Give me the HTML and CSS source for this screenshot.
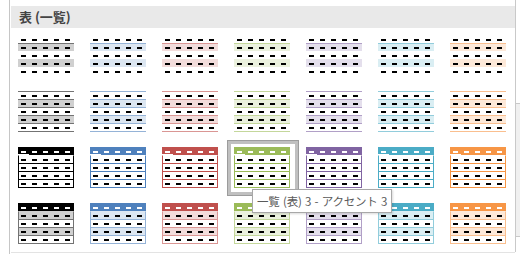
FILE: index.html
```html
<!DOCTYPE html>
<html lang="ja">
<head>
    <meta charset="UTF-8">
    <meta name="viewport" content="width=device-width, initial-scale=1.0">
    <title>表スタイル</title>
    <link rel="stylesheet" href="styles.css">
</head>
<body>
    <div class="panel">
        <div class="gallery">
            <div class="group-title">表 (一覧)</div>
            <div class="grid">
                <!-- light -->
                <div class="cell"><div class="thumb light k"><span></span><span></span><span></span><span></span><span></span></div></div>
                <div class="cell"><div class="thumb light b"><span></span><span></span><span></span><span></span><span></span></div></div>
                <div class="cell"><div class="thumb light r"><span></span><span></span><span></span><span></span><span></span></div></div>
                <div class="cell"><div class="thumb light g"><span></span><span></span><span></span><span></span><span></span></div></div>
                <div class="cell"><div class="thumb light p"><span></span><span></span><span></span><span></span><span></span></div></div>
                <div class="cell"><div class="thumb light a"><span></span><span></span><span></span><span></span><span></span></div></div>
                <div class="cell"><div class="thumb light o"><span></span><span></span><span></span><span></span><span></span></div></div>
                <!-- medium -->
                <div class="cell"><div class="thumb medium k"><span></span><span></span><span></span><span></span><span></span></div></div>
                <div class="cell"><div class="thumb medium b"><span></span><span></span><span></span><span></span><span></span></div></div>
                <div class="cell"><div class="thumb medium r"><span></span><span></span><span></span><span></span><span></span></div></div>
                <div class="cell"><div class="thumb medium g"><span></span><span></span><span></span><span></span><span></span></div></div>
                <div class="cell"><div class="thumb medium p"><span></span><span></span><span></span><span></span><span></span></div></div>
                <div class="cell"><div class="thumb medium a"><span></span><span></span><span></span><span></span><span></span></div></div>
                <div class="cell"><div class="thumb medium o"><span></span><span></span><span></span><span></span><span></span></div></div>
                <!-- grid -->
                <div class="cell"><div class="thumb grid-t k"><span></span><span></span><span></span><span></span><span></span></div></div>
                <div class="cell"><div class="thumb grid-t b"><span></span><span></span><span></span><span></span><span></span></div></div>
                <div class="cell"><div class="thumb grid-t r"><span></span><span></span><span></span><span></span><span></span></div></div>
                <div class="cell selected"><div class="thumb grid-t g"><span></span><span></span><span></span><span></span><span></span></div></div>
                <div class="cell"><div class="thumb grid-t p"><span></span><span></span><span></span><span></span><span></span></div></div>
                <div class="cell"><div class="thumb grid-t a"><span></span><span></span><span></span><span></span><span></span></div></div>
                <div class="cell"><div class="thumb grid-t o"><span></span><span></span><span></span><span></span><span></span></div></div>
                <!-- banded -->
                <div class="cell"><div class="thumb banded k"><span></span><span></span><span></span><span></span><span></span></div></div>
                <div class="cell"><div class="thumb banded b"><span></span><span></span><span></span><span></span><span></span></div></div>
                <div class="cell"><div class="thumb banded r"><span></span><span></span><span></span><span></span><span></span></div></div>
                <div class="cell"><div class="thumb banded g"><span></span><span></span><span></span><span></span><span></span></div></div>
                <div class="cell"><div class="thumb banded p"><span></span><span></span><span></span><span></span><span></span></div></div>
                <div class="cell"><div class="thumb banded a"><span></span><span></span><span></span><span></span><span></span></div></div>
                <div class="cell"><div class="thumb banded o"><span></span><span></span><span></span><span></span><span></span></div></div>
            </div>
            <div class="tooltip">一覧 (表) 3 - アクセント 3</div>
        </div>
        <div class="scrollbar">
            <div class="scroll-thumb"></div>
            <div class="scroll-track"></div>
            <div class="scroll-btn"></div>
        </div>
    </div>
</body>
</html>
```

FILE: styles.css
```css
body {
    margin: 0;
    background: #fff;
    font-family: "Noto Sans CJK JP", "Noto Sans", sans-serif;
}
.panel {
    display: flex;
    height: 254px;
    margin-left: 9px;
    border-left: 1px solid #c6c6c6;
    padding-left: 1px;
}
.gallery {
    position: relative;
    width: 504px;
    padding-top: 6px;
}
.group-title {
    height: 22px;
    line-height: 22px;
    padding-left: 8px;
    background: #e9e9e9;
    color: #444;
    font-size: 13px;
    font-weight: bold;
}
.grid {
    display: grid;
    grid-template-columns: repeat(7, 72px);
    grid-auto-rows: 56px;
    border-bottom: 1px solid #e3e3e3;
}
.cell {
    padding: 7px 0 0 7px;
}
.cell.selected {
    box-shadow: inset 0 0 0 1px #9c9c9c, inset 0 0 0 4px #c0c0c0;
}

/* colour sets: accent / mid line / tint */
.k { --accent: #000; --mid: #737373; --tint: #d0d0d0; }
.b { --accent: #4f81bd; --mid: #95b3d7; --tint: #dce6f1; }
.r { --accent: #c0504d; --mid: #da9694; --tint: #f2dcdb; }
.g { --accent: #9bbb59; --mid: #c4d79b; --tint: #ebf1de; }
.p { --accent: #8064a2; --mid: #b1a0c7; --tint: #e4dfec; }
.a { --accent: #4bacc6; --mid: #92cddc; --tint: #daeef3; }
.o { --accent: #f79646; --mid: #fabf8f; --tint: #fde9d9; }

.thumb {
    width: 56px;
    display: flex;
    flex-direction: column;
}
.thumb span {
    display: block;
    height: 8px;
    box-sizing: border-box;
    border-top: 1px solid transparent;
    background-image: linear-gradient(90deg, #000 5px, transparent 5px);
    background-size: 11px 2px;
    background-repeat: repeat-x;
    background-position: 3px 3px;
}

/* light: line under header, two bands */
.light span:nth-child(2) {
    border-top-color: var(--mid);
    background-color: var(--tint);
}
.light span:nth-child(4) {
    background-color: var(--tint);
}

/* medium: horizontal rules everywhere */
.medium span {
    border-top-color: var(--mid);
}
.medium span:nth-child(2),
.medium span:nth-child(4) {
    background-color: var(--tint);
}
.medium span:last-child {
    height: 9px;
    border-bottom: 1px solid var(--mid);
}

/* grid + banded: filled header, boxed rows */
.grid-t { --line: var(--accent); }
.banded { --line: var(--mid); }
.grid-t span,
.banded span {
    border-left: 1px solid var(--line);
    border-right: 1px solid var(--line);
    background-position: 2px 3px;
}
.grid-t span:nth-child(n+3),
.banded span:nth-child(n+3) {
    border-top-color: var(--line);
}
.grid-t span:last-child,
.banded span:last-child {
    height: 9px;
    border-bottom: 1px solid var(--line);
}
.grid-t span:first-child,
.banded span:first-child {
    border: 0;
    background-color: var(--accent);
    background-image: linear-gradient(90deg, #fff 5px, transparent 5px);
    background-position: 3px 4px;
}
.grid-t span:first-child {
    background-image: linear-gradient(#fff, #fff), linear-gradient(90deg, #fff 5px, transparent 5px);
    background-size: 11px 1px, 11px 2px;
    background-repeat: no-repeat, repeat-x;
    background-position: 0 100%, 3px 4px;
}
.banded span:nth-child(2),
.banded span:nth-child(4) {
    background-color: var(--tint);
}

.tooltip {
    position: absolute;
    left: 241px;
    top: 189px;
    height: 22px;
    line-height: 22px;
    padding: 0 4px;
    background: #fff;
    border: 1px solid #a8a8a8;
    box-shadow: 1px 1px 2px rgba(0, 0, 0, 0.15);
    color: #5a5a5a;
    font-size: 11.5px;
    letter-spacing: -0.2px;
    word-spacing: 1px;
    white-space: nowrap;
}

.scrollbar {
    display: flex;
    flex-direction: column;
    width: 4px;
    border-left: 1px solid #c9c9c9;
    height: 252px;
}
.scroll-thumb {
    height: 103px;
    background: #fff;
    border-bottom: 1px solid #c9c9c9;
}
.scroll-track {
    flex: 1;
    background: #f0f0f0;
}
.scroll-btn {
    height: 15px;
    background: #fff;
    border-top: 1px solid #c9c9c9;
}
```
